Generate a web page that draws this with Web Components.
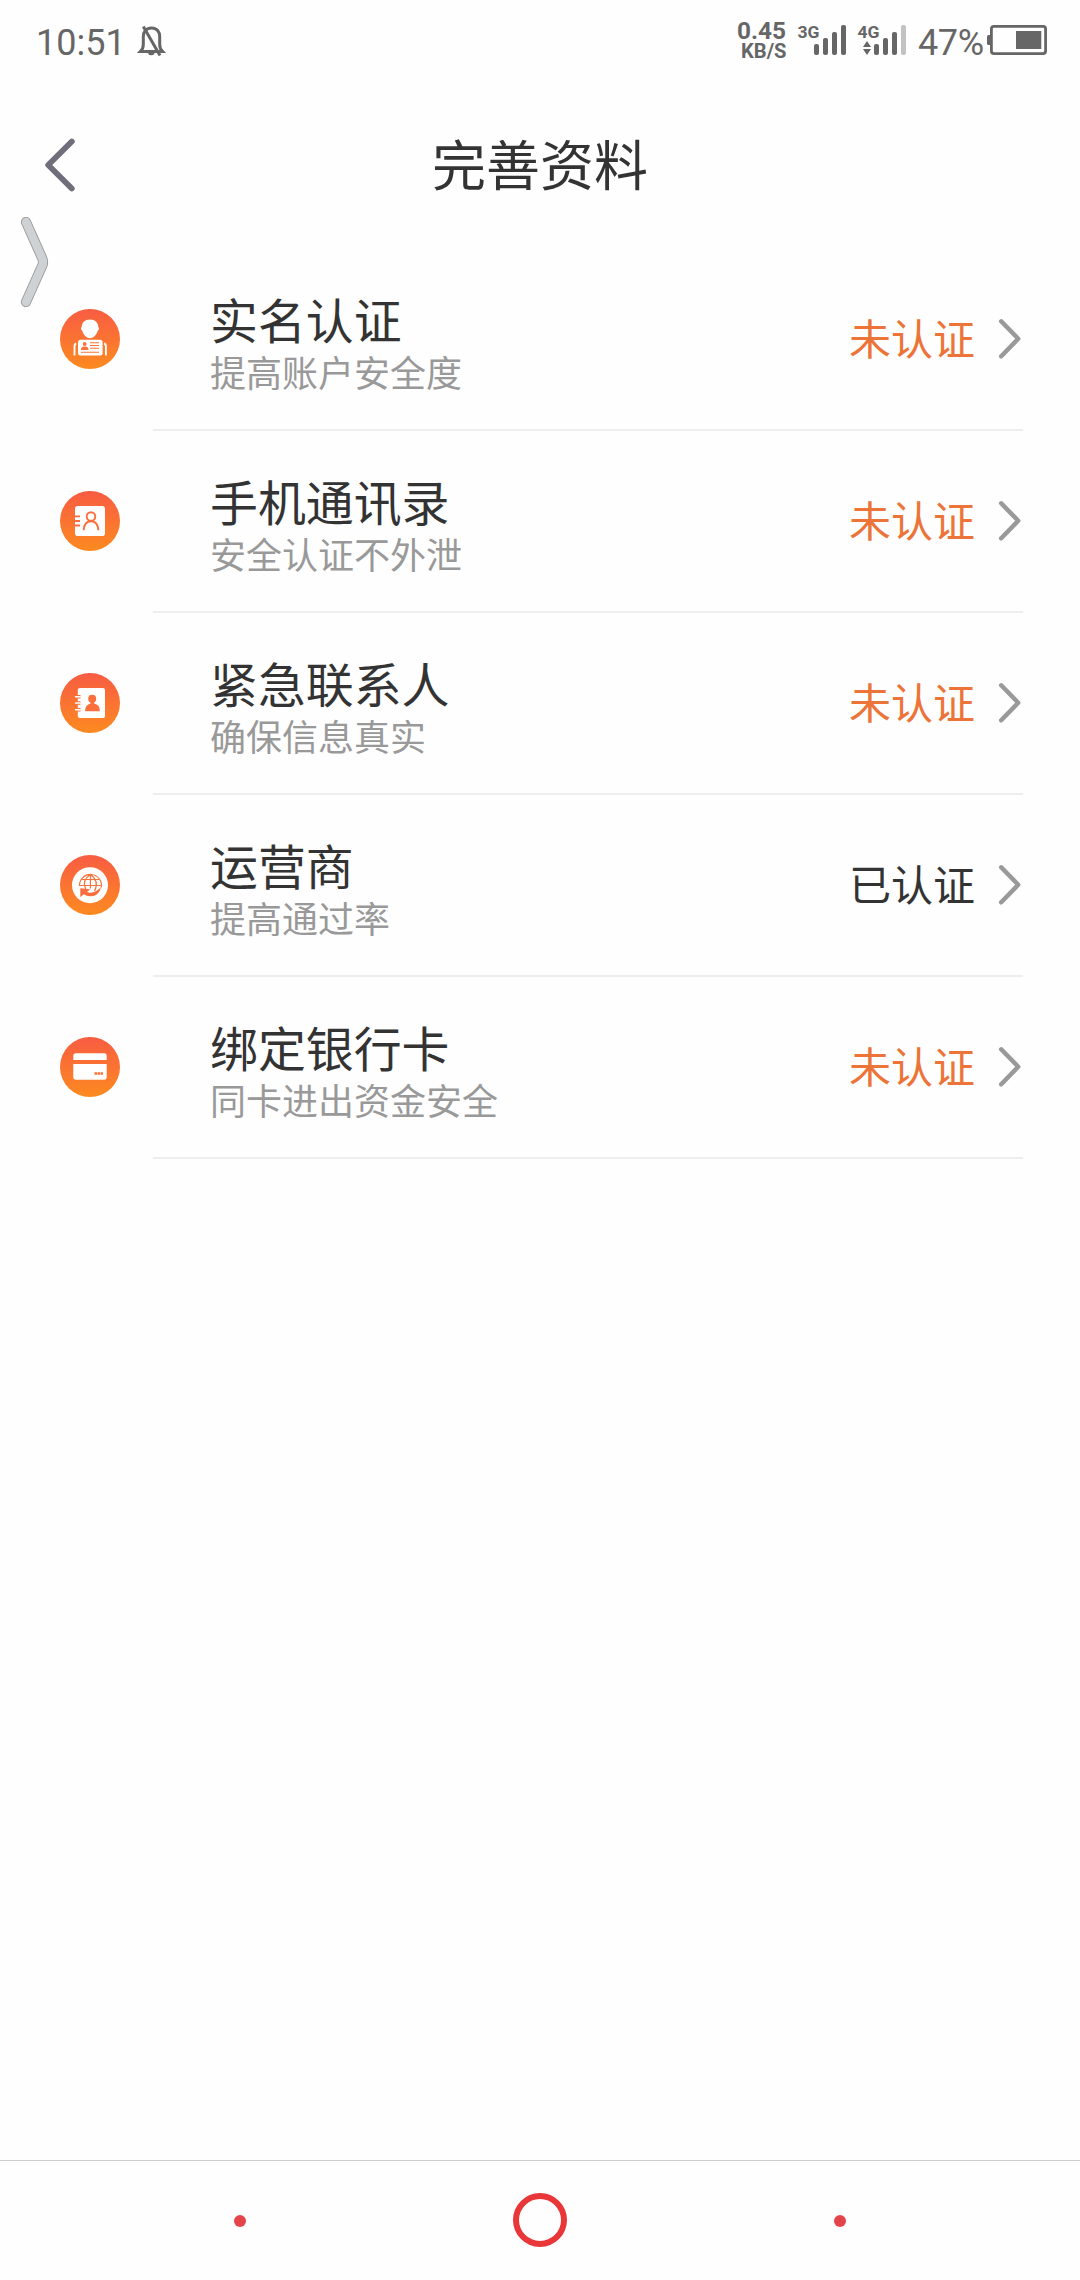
<!DOCTYPE html>
<html lang="zh-CN">
<head>
<meta charset="utf-8">
<title>完善资料</title>
<style>
html,body{margin:0;background:#fefefe}
body{width:1080px;height:2280px;overflow:hidden;font-family:Roboto,"Noto Sans CJK SC",sans-serif;color:#333}
</style>
</head>
<body>
<app-screen>
  <status-bar slot="status"></status-bar>
  <title-bar slot="header">完善资料</title-bar>
  <auth-item icon="identity"><span slot="title">实名认证</span><span slot="note">提高账户安全度</span><span slot="state">未认证</span></auth-item>
  <auth-item icon="contacts"><span slot="title">手机通讯录</span><span slot="note">安全认证不外泄</span><span slot="state">未认证</span></auth-item>
  <auth-item icon="emergency"><span slot="title">紧急联系人</span><span slot="note">确保信息真实</span><span slot="state">未认证</span></auth-item>
  <auth-item icon="carrier" done><span slot="title">运营商</span><span slot="note">提高通过率</span><span slot="state">已认证</span></auth-item>
  <auth-item icon="card"><span slot="title">绑定银行卡</span><span slot="note">同卡进出资金安全</span><span slot="state">未认证</span></auth-item>
  <edge-handle slot="overlay"></edge-handle>
  <nav-bar slot="nav"></nav-bar>
</app-screen>
<script>
function define(name, html) {
  customElements.define(name, class extends HTMLElement {
    constructor() {
      super();
      this.attachShadow({mode: 'open'}).innerHTML = html;
    }
  });
}

define('app-screen', `
<style>
:host{display:flex;flex-direction:column;width:1080px;height:2280px;position:relative}
main{flex:1;padding-top:19px}
</style>
<slot name="status"></slot><slot name="header"></slot>
<main><slot></slot></main>
<slot name="nav"></slot><slot name="overlay"></slot>`);

define('status-bar', `
<style>
:host{display:flex;justify-content:space-between;height:84px;color:#666;font-family:Roboto,sans-serif}
svg{display:block;fill:#666}
</style>
<svg width="200" height="84" viewBox="0 0 200 84">
  <text x="36" y="55" font-size="36">10:51</text>
  <g fill="none" stroke="#666" stroke-width="3">
    <path d="M140.5 51.400c2-2 2.800-4 2.800-7v-7.500c0-5.500 3-9 8.200-9s8.200 3.500 8.200 9v7.500c0 3 .8 5 2.800 7z"/>
    <path d="M143.300 26.500L160 55.500"/>
  </g>
  <path d="M147.500 52.500h7.500q-1 2.800-3.700 2.800t-3.800-2.800z"/>
</svg>
<svg width="350" height="84" viewBox="730 0 350 84">
  <g font-weight="700">
    <text x="737" y="39" font-size="24" textLength="49" lengthAdjust="spacingAndGlyphs">0.45</text>
    <text x="741" y="58" font-size="19.500" textLength="45.500" lengthAdjust="spacingAndGlyphs">KB/S</text>
    <text x="797.500" y="37.500" font-size="17" textLength="22" lengthAdjust="spacingAndGlyphs">3G</text>
    <text x="857.500" y="37.500" font-size="17" textLength="22" lengthAdjust="spacingAndGlyphs">4G</text>
  </g>
  <rect x="814" y="44" width="5" height="11" rx="2"/><rect x="823" y="38" width="5" height="17" rx="2"/><rect x="832" y="32" width="5" height="23" rx="2"/><rect x="841" y="25" width="5" height="30" rx="2"/>
  <path d="M863 47l4-6 4 6zM863 49l4 6 4-6z"/>
  <rect x="874" y="44" width="5" height="11" rx="2"/><rect x="883" y="38" width="5" height="17" rx="2"/><rect x="892" y="32" width="5" height="23" rx="2"/><rect x="901" y="25" width="5" height="30" rx="2" fill="#c2c2c2"/>
  <text x="918" y="55" font-size="36" textLength="66">47%</text>
  <rect x="991.400" y="26.400" width="54.200" height="27.200" rx="2.500" fill="none" stroke="#666" stroke-width="2.800"/>
  <rect x="987" y="35" width="4.500" height="10" rx="1.500"/><rect x="1016" y="31" width="25.300" height="18"/>
</svg>`);

define('title-bar', `
<style>
:host{display:grid;grid-template-columns:120px 1fr 120px;align-items:center;height:146px;font-size:54px;line-height:80px;text-align:center}
h1{margin:0;font:inherit;padding-top:21px}
svg{display:block;padding-top:16px}
</style>
<svg width="120" height="60" viewBox="0 0 120 60"><path d="M71.800 6.500L48.200 30l23.600 23.500" fill="none" stroke="#706e7a" stroke-width="5.800" stroke-linecap="round" stroke-linejoin="round"/></svg>
<h1><slot></slot></h1>`);

define('edge-handle', `
<style>
:host{display:block;position:absolute;left:18px;top:214px;width:34px;height:96px}
</style>
<svg width="34" height="96" viewBox="0 0 34 96" fill="none" stroke-linecap="round" stroke-linejoin="round">
<path d="M8 8L24.300 44.500Q25.800 48 24.300 51.500L8 88" stroke="#98999a" stroke-width="10.200"/>
<path d="M8 8L24.300 44.500Q25.800 48 24.300 51.500L8 88" stroke="#ced2d5" stroke-width="8.400"/></svg>`);

const glyphs = {
  identity: `<path d="M30 10.500c5 0 8.300 3 8.300 7.500 1.200.5.700 3.300-.6 3.800-1 4-4 7.400-7.700 7.400s-6.700-3.400-7.700-7.400c-1.300-.5-1.800-3.300-.6-3.800 0-4.500 3.300-7.500 8.300-7.500z"/>
    <rect x="18" y="30.800" width="24.600" height="15.800" rx="2.500"/>
    <path d="M16.200 34.500c-1.300.3-1.700 1.300-1.700 3v9M44.200 34.500c1.300.3 1.700 1.300 1.700 3v9" fill="none" stroke="#fff" stroke-width="1.900"/>
    <g fill="#fb733a"><circle cx="24.700" cy="35" r="1.900"/><path d="M21 41c0-3 1.500-3.600 3.700-3.600s3.800.6 3.800 3.600z"/><path d="M30 33.300h9v.9h-9zM30 36h9v.9h-9zM30 38.800h9v1h-9zM21 42.700h18v1H21z"/></g>`,
  contacts: `<rect x="15" y="15" width="30" height="30" rx="2.800"/>
    <g fill="none" stroke="#fb6e3c" stroke-width="1.900"><path d="M14 25.400h6M14 30h6M14 34.500h6"/><circle cx="31" cy="25.500" r="4.300"/><path d="M23.600 39.200c.4-5.500 3-9 7.400-9s7 3.500 7.400 9"/></g>`,
  emergency: `<rect x="17.800" y="15" width="27.200" height="30" rx="2"/>
    <g fill="none"><path d="M17.300 23.700h3.200M17.300 30h3.200M17.300 36.700h3.200" stroke="#fb6e3c" stroke-width="3.600"/><path d="M15.600 23.700h4.600M15.600 30h4.600M15.600 36.700h4.600" stroke="#fff" stroke-width="1.600" stroke-linecap="round"/></g>
    <g fill="#fa6f3b"><circle cx="32.200" cy="25.700" r="4"/><path d="M30.500 28h3.600v2.600c4 1 5.700 3 5.700 7.600H25.200c0-4.600 1.800-6.600 5.300-7.600z"/></g>`,
  carrier: `<circle cx="30" cy="30.200" r="18"/>
    <g fill="none" stroke="#f9743c" stroke-width="1.200"><path d="M19.500 31a11 11 0 1 1 21.800 1.500M30.400 19.600v14M19.500 30.500h22M21.500 24.500h18.200M30.400 19.600c-7.500 5-6.500 11-4.600 14.500M30.400 19.600c7 5 7 11 4.200 16.500"/></g>
    <path fill="#fa6d3c" d="M20.300 33.300l9.800.9-3 2.900c4.300 1.700 9.300.2 13.900-5-1.500 6.500-5 9.200-10.500 9.200-2.800 0-5-.8-6.700-2l-3.500 3z"/>`,
  card: `<path d="M16 16.200h28q2.700 0 2.700 2.700v4H13.300v-4q0-2.700 2.700-2.700zM13.300 27h33.400v13q0 2.700-2.700 2.700H16q-2.700 0-2.700-2.700z"/>
    <path d="M34.500 36.500h8.600" stroke="#fb7136" stroke-width="2.600" stroke-dasharray="2.500 .5"/>`
};

define('auth-icon', `<style>:host{display:block;width:60px;height:60px}svg{display:block}</style>
<svg width="60" height="60" viewBox="0 0 60 60"><defs><linearGradient id="g" x1="0" y1="0" x2="0" y2="1"><stop offset="0" stop-color="#f85c43"/><stop offset="1" stop-color="#fd8a20"/></linearGradient></defs><circle cx="30" cy="30" r="30" fill="url(#g)"/><g id="glyph" fill="#fff"></g></svg>`);

customElements.define('auth-item', class extends HTMLElement {
  constructor() {
    super();
    this.attachShadow({mode: 'open'}).innerHTML = `
<style>
:host{display:flex;height:182px;padding:0 57px 0 60px;box-sizing:border-box;--state:#ec7439}
:host([done]){--state:#333}
auth-icon{margin:60px 33px 0 0}
.body{flex:1;display:flex;align-items:center;height:182px;box-sizing:border-box;border-bottom:2px solid #eee;padding-left:57px}
.text{flex:1;padding-top:12px}
.title{font-size:47.900px;line-height:60px}
.note{font-size:36px;line-height:46px;margin-top:-1px;color:#999}
.state{font-size:42px;line-height:60px;color:var(--state);margin:3px 22px 0 0}
svg{display:block;margin-right:2px}
</style>
<auth-icon></auth-icon>
<div class="body">
  <div class="text"><div class="title"><slot name="title"></slot></div><div class="note"><slot name="note"></slot></div></div>
  <div class="state"><slot name="state"></slot></div>
  <svg width="24" height="44" viewBox="0 0 24 44"><path d="M4.200 4.300L21.200 21.800 4.200 39.300" fill="none" stroke="#999" stroke-width="4.500" stroke-linecap="round" stroke-linejoin="round"/></svg>
</div>`;
  }
  connectedCallback() {
    this.shadowRoot.querySelector('auth-icon').shadowRoot.getElementById('glyph').innerHTML = glyphs[this.getAttribute('icon')];
  }
});

define('nav-bar', `
<style>
:host{display:flex;justify-content:space-between;align-items:center;height:120px;box-sizing:border-box;border-top:1px solid #ccc;padding:0 234px}
i{width:12px;height:12px;border-radius:50%;background:#e3454a}
b{width:54px;height:54px;box-sizing:border-box;border:6px solid #e93638;border-radius:50%;margin-top:-1px}
</style><i></i><b></b><i></i>`);
</script>
</body>
</html>
